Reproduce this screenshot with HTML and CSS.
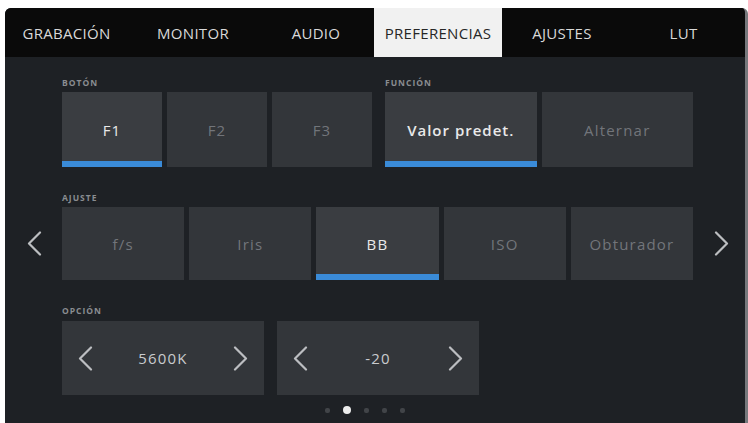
FILE: index.html
```html
<!DOCTYPE html>
<html lang="es">
<head>
<meta charset="utf-8">
<title>Preferencias</title>
<link rel="stylesheet" href="styles.css">
</head>
<body>
<div class="screen">
  <nav class="tabs">
    <div class="tab">GRABACIÓN</div>
    <div class="tab">MONITOR</div>
    <div class="tab">AUDIO</div>
    <div class="tab active">PREFERENCIAS</div>
    <div class="tab">AJUSTES</div>
    <div class="tab">LUT</div>
  </nav>

  <main class="main">
    <section class="section first">
      <div class="pair">
        <div class="group g-boton">
          <div class="label">BOTÓN</div>
          <div class="btns">
            <div class="btn sel">F1</div>
            <div class="btn dim">F2</div>
            <div class="btn dim">F3</div>
          </div>
        </div>
        <div class="group g-func">
          <div class="label">FUNCIÓN</div>
          <div class="btns">
            <div class="btn sel strong">Valor predet.</div>
            <div class="btn dim">Alternar</div>
          </div>
        </div>
      </div>
    </section>

    <section class="section">
      <div class="label">AJUSTE</div>
      <div class="arrow left">
        <svg width="15" height="25" viewBox="0 0 15 25"><polyline points="13,1.5 2,12.5 13,23.5"/></svg>
      </div>
      <div class="btns row2">
        <div class="btn dim">f/s</div>
        <div class="btn dim">Iris</div>
        <div class="btn sel">BB</div>
        <div class="btn dim">ISO</div>
        <div class="btn dim">Obturador</div>
      </div>
      <div class="arrow right">
        <svg width="15" height="25" viewBox="0 0 15 25"><polyline points="2,1.5 13,12.5 2,23.5"/></svg>
      </div>
    </section>

    <section class="section last">
      <div class="label opt">OPCIÓN</div>
      <div class="opts">
        <div class="opt-box">
          <svg width="15" height="25" viewBox="0 0 15 25"><polyline points="13,1.5 2,12.5 13,23.5"/></svg>
          <span class="val">5600K</span>
          <svg width="15" height="25" viewBox="0 0 15 25"><polyline points="2,1.5 13,12.5 2,23.5"/></svg>
        </div>
        <div class="opt-box">
          <svg width="15" height="25" viewBox="0 0 15 25"><polyline points="13,1.5 2,12.5 13,23.5"/></svg>
          <span class="val">-20</span>
          <svg width="15" height="25" viewBox="0 0 15 25"><polyline points="2,1.5 13,12.5 2,23.5"/></svg>
        </div>
      </div>
    </section>

    <div class="dots">
      <span class="dot"></span>
      <span class="dot on"></span>
      <span class="dot"></span>
      <span class="dot"></span>
      <span class="dot"></span>
    </div>
  </main>
</div>
</body>
</html>
```

FILE: styles.css
```css
html, body {
  margin: 0;
  padding: 0;
  background: #ffffff;
}

body {
  font-family: "Open Sans", "Noto Sans", "DejaVu Sans", sans-serif;
  width: 748px;
  height: 423px;
  overflow: hidden;
}

.screen {
  margin: 8px 0 0 5px;
  width: 740px;
  height: 415px;
  background: #1e2125;
  border-right: 3px solid #76787c;
  border-top-left-radius: 6px;
  border-top-right-radius: 6px;
  overflow: hidden;
}

.tabs {
  display: grid;
  grid-template-columns: 123px 130px 116px 128px 120px 123px;
  height: 49px;
  background: #0a0a0a;
}

.tab {
  display: flex;
  align-items: center;
  justify-content: center;
  color: #d9d9d9;
  font-size: 15px;
  font-weight: 500;
  letter-spacing: 0.3px;
}

.tab.active {
  background: #f1f1f1;
  color: #262626;
}

.main {
  padding-top: 21px;
}

.section {
  display: grid;
  grid-template-columns: 57px 631px 52px;
  margin-top: 26px;
}

.section.first {
  margin-top: 0;
}

.section > .label,
.section > .btns,
.section > .opts,
.section > .pair {
  grid-column: 2;
}

.label {
  height: 10px;
  line-height: 10px;
  font-size: 8.5px;
  font-weight: 700;
  letter-spacing: 1px;
  color: #8a8d91;
  margin-bottom: 4px;
}

.label.opt {
  margin-bottom: 5px;
}

.pair {
  display: flex;
  gap: 13px;
}

.g-boton {
  width: 310px;
}

.g-func {
  width: 308px;
}

.btns {
  display: flex;
  gap: 5px;
}

.g-boton .btn {
  width: 100px;
  height: 75px;
}

.g-func .btn {
  flex: 1;
  height: 75px;
}

.row2 .btn {
  flex: 1;
  height: 73px;
}

.btn {
  box-sizing: border-box;
  display: flex;
  align-items: center;
  justify-content: center;
  background: #33363a;
  color: #e9e9e9;
  font-size: 15px;
  letter-spacing: 1.2px;
}

.btn.dim {
  color: #72757a;
}

.btn.sel {
  background: #3a3d41;
  border-bottom: 6px solid #3a8bd8;
  padding-top: 6px;
}

.btn.strong {
  font-weight: 600;
  letter-spacing: 1px;
}

.arrow {
  grid-row: 2;
  display: flex;
  align-items: center;
}

.arrow.left {
  grid-column: 1;
  padding-left: 22px;
}

.arrow.right {
  grid-column: 3;
  padding-left: 21px;
}

svg polyline {
  fill: none;
  stroke: #bcbec1;
  stroke-width: 2.2;
  stroke-linecap: round;
  stroke-linejoin: round;
}

.opts {
  display: flex;
  gap: 13px;
}

.opt-box {
  width: 202px;
  height: 74px;
  box-sizing: border-box;
  padding: 0 16px;
  display: flex;
  align-items: center;
  justify-content: space-between;
  background: #33363a;
}

.val {
  color: #c9cbce;
  font-size: 15px;
  letter-spacing: 1.2px;
}

.dots {
  display: flex;
  justify-content: center;
  align-items: center;
  gap: 13px;
  height: 8px;
  margin-top: 11px;
  padding-right: 20px;
}

.dot {
  width: 5px;
  height: 5px;
  border-radius: 2px;
  background: #414448;
}

.dot.on {
  width: 8px;
  height: 8px;
  border-radius: 50%;
  background: #ececec;
}
```
